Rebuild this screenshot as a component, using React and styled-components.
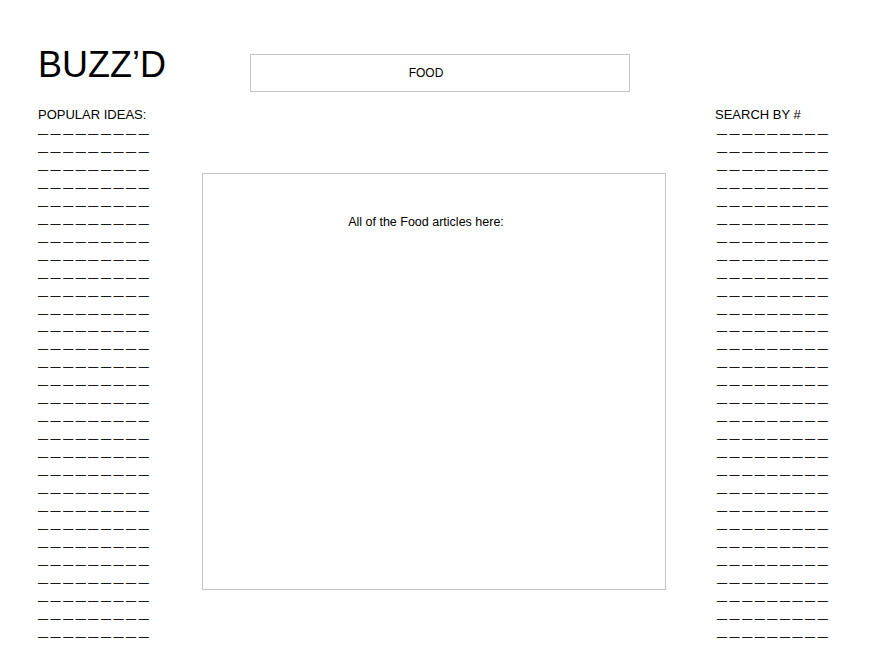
import React from "react";
import styled, { createGlobalStyle } from "styled-components";

const Global = createGlobalStyle`
  html, body { margin: 0; padding: 0; background: #fff; }
  body { font-family: "Liberation Sans", Arial, Helvetica, sans-serif; color: #000; }
`;

const Page = styled.div`
  width: 875px;
  height: 670px;
  overflow: hidden;
  box-sizing: border-box;
  padding: 0 0 0 38px;
`;

const Header = styled.header`
  display: flex;
  align-items: flex-start;
  height: 106px;
  box-sizing: border-box;
`;

const Logo = styled.h1`
  margin: 42px 0 0 0;
  font-size: 36px;
  font-weight: 400;
  line-height: 46px;
  width: 212px;
`;

const CategoryBox = styled.div`
  margin-top: 54px;
  width: 380px;
  height: 38px;
  box-sizing: border-box;
  border: 1px solid #c4c4c4;
  display: flex;
  align-items: center;
  justify-content: center;
  padding-right: 28px;
  font-size: 12px;
`;

const Main = styled.main`
  display: grid;
  grid-template-columns: 164px 464px auto;
  align-items: start;
`;

const Sidebar = styled.aside`
  padding-left: ${(p) => p.$offset || 0}px;
`;

const SideTitle = styled.div`
  font-size: 13px;
  line-height: 18px;
  white-space: nowrap;
`;

const DashRow = styled.div`
  font-size: 10px;
  line-height: 17.96px;
  letter-spacing: -0.1px;
  white-space: nowrap;
  padding-left: ${(p) => p.$indent || 0}px;
  transform: translateY(1px);
  -webkit-text-stroke: 0.1px #000;
`;

const ArticlesBox = styled.section`
  margin-top: 67px;
  width: 464px;
  height: 417px;
  box-sizing: border-box;
  border: 1px solid #c4c4c4;
  padding: 39px 16px 0 0;
  text-align: center;
  font-size: 12.5px;
  line-height: 18px;
`;

const DASHES = "— — — — — — — — —";
const rows = Array.from({ length: 29 }, (_, i) => i);

function DashList({ indent }) {
  return rows.map((i) => (
    <DashRow key={i} $indent={indent}>
      {DASHES}
    </DashRow>
  ));
}

export default function App() {
  return (
    <>
      <Global />
      <Page>
        <Header>
          <Logo>BUZZ’D</Logo>
          <CategoryBox>FOOD</CategoryBox>
        </Header>
        <Main>
          <Sidebar>
            <SideTitle>POPULAR IDEAS:</SideTitle>
            <DashList indent={0} />
          </Sidebar>
          <ArticlesBox>All of the Food articles here:</ArticlesBox>
          <Sidebar $offset={49}>
            <SideTitle>SEARCH BY #</SideTitle>
            <DashList indent={2} />
          </Sidebar>
        </Main>
      </Page>
    </>
  );
}
